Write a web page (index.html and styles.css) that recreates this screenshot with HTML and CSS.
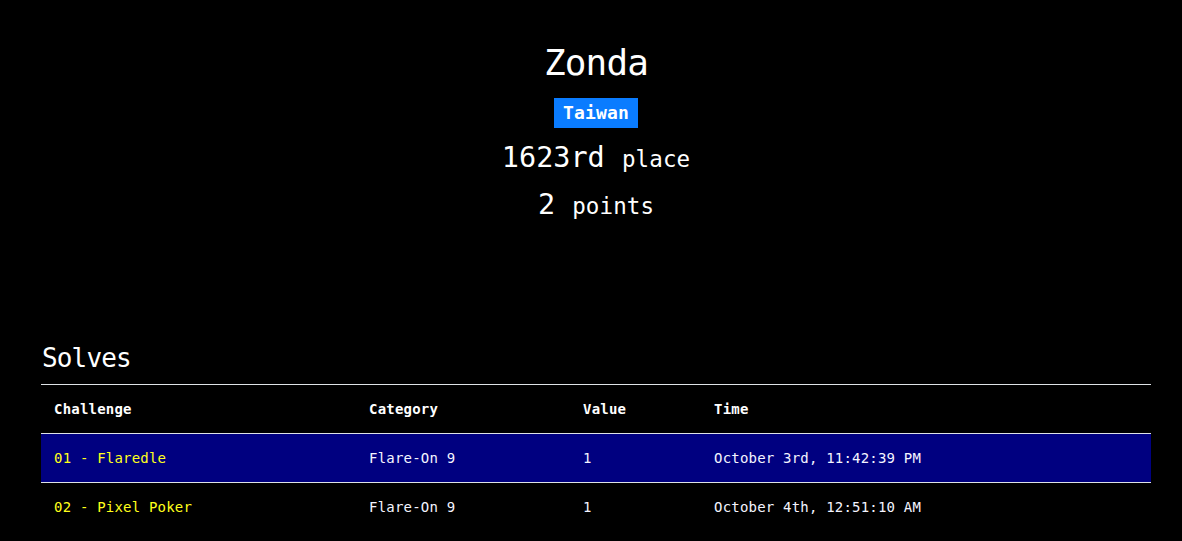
FILE: index.html
```html
<!DOCTYPE html>
<html>
<head>
<meta charset="utf-8">
<title>Zonda</title>
<link rel="stylesheet" href="styles.css">
</head>
<body>
<div class="page">
  <header class="profile">
    <h1 class="name">Zonda</h1>
    <div class="badge-row"><span class="badge">Taiwan</span></div>
    <h2 class="stat">1623rd <small>place</small></h2>
    <h2 class="stat">2 <small>points</small></h2>
  </header>
  <section class="solves">
    <h3 class="solves-title">Solves</h3>
    <table class="table">
      <colgroup>
        <col class="c1"><col class="c2"><col class="c3"><col class="c4">
      </colgroup>
      <thead>
        <tr><th>Challenge</th><th>Category</th><th>Value</th><th>Time</th></tr>
      </thead>
      <tbody>
        <tr class="striped"><td class="chal">01 - Flaredle</td><td>Flare-On 9</td><td>1</td><td>October 3rd, 11:42:39 PM</td></tr>
        <tr><td class="chal">02 - Pixel Poker</td><td>Flare-On 9</td><td>1</td><td>October 4th, 12:51:10 AM</td></tr>
      </tbody>
    </table>
  </section>
</div>
</body>
</html>
```

FILE: styles.css
```css
html, body {
  margin: 0;
  padding: 0;
  background: #000;
  color: #fff;
  font-family: "DejaVu Sans Mono", "Liberation Mono", monospace;
}

.page {
  width: 1110px;
  margin-left: 41px;
}

.profile {
  display: flex;
  flex-direction: column;
  align-items: center;
  padding-top: 41px;
}

.name {
  margin: 0;
  font-size: 36px;
  line-height: 44px;
  font-weight: normal;
  letter-spacing: -0.9px;
}

.badge-row {
  margin-top: 13px;
  display: flex;
  justify-content: center;
}

.badge {
  display: block;
  background: #0a7cff;
  color: #fff;
  font-weight: bold;
  font-size: 18px;
  line-height: 30px;
  height: 30px;
  padding: 0 9px;
  letter-spacing: 0.2px;
}

.stat {
  margin: 0;
  font-weight: normal;
  font-size: 28.5px;
  line-height: 45px;
}

.stat:first-of-type {
  margin-top: 7px;
}

.stat small {
  font-size: 22.5px;
  letter-spacing: 0.1px;
}

.solves {
  margin-top: 111px;
}

.solves-title {
  margin: 0 0 0 1px;
  font-weight: normal;
  font-size: 26px;
  line-height: 36px;
  letter-spacing: -0.85px;
}

.table {
  margin-top: 8px;
  width: 1110px;
  border-collapse: collapse;
  table-layout: fixed;
  font-size: 14px;
  letter-spacing: 0.2px;
}

.c1 { width: 315px; }
.c2 { width: 214px; }
.c3 { width: 131px; }
.c4 { width: 450px; }

.table th,
.table td {
  text-align: left;
  padding: 12px 12px 12px 13px;
  line-height: 24px;
  border-top: 1px solid #dee2e6;
  white-space: nowrap;
}

.table th {
  font-weight: bold;
}

.table td {
  color: #f4f4ff;
}

.table tr.striped td {
  background: #000080;
}

.table td.chal {
  color: #ffff1a;
}
```
